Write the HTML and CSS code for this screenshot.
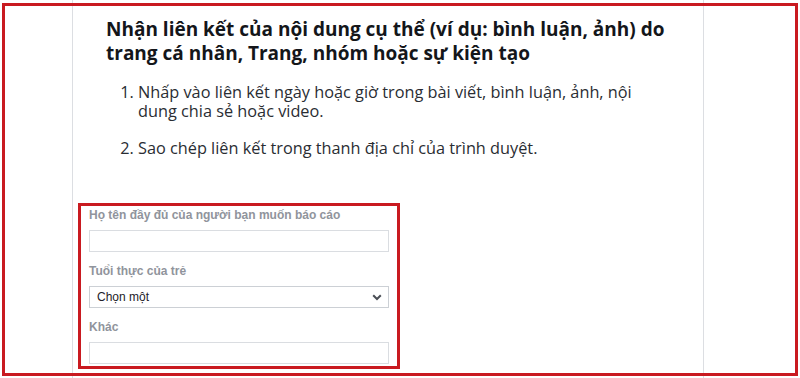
FILE: index.html
```html
<!DOCTYPE html>
<html lang="vi">
<head>
<meta charset="utf-8">
<title>Báo cáo</title>
<link rel="stylesheet" href="styles.css">
</head>
<body>
<div class="page">
  <div class="gutter"></div>
  <main class="main">
    <section class="article">
      <h2 class="title">Nhận liên kết của nội dung cụ thể (ví dụ: bình luận, ảnh) do trang cá nhân, Trang, nhóm hoặc sự kiện tạo</h2>
      <ol class="steps">
        <li>Nhấp vào liên kết ngày hoặc giờ trong bài viết, bình luận, ảnh, nội dung chia sẻ hoặc video.</li>
        <li>Sao chép liên kết trong thanh địa chỉ của trình duyệt.</li>
      </ol>
    </section>
    <form class="form">
      <label class="label">Họ tên đầy đủ của người bạn muốn báo cáo</label>
      <input class="field" type="text">
      <label class="label">Tuổi thực của trẻ</label>
      <div class="select">
        <span class="select-text">Chọn một</span>
        <svg class="chev" width="10" height="7" viewBox="0 0 10 7"><path d="M1.2 1.2 L5 5 L8.8 1.2" fill="none" stroke="#4b4f56" stroke-width="2"/></svg>
      </div>
      <label class="label">Khác</label>
      <input class="field" type="text">
    </form>
  </main>
  <div class="gutter"></div>
</div>
<div class="mark mark-outer"></div>
<div class="mark mark-inner"></div>
</body>
</html>
```
FILE: styles.css
```css
html, body {
  margin: 0;
  padding: 0;
  background: #fff;
}
body {
  width: 800px;
  height: 378px;
  overflow: hidden;
  position: relative;
}
.page {
  display: flex;
  height: 378px;
}
.gutter {
  width: 72px;
  flex: 0 0 72px;
}
.gutter:last-child {
  flex: 1 1 auto;
}
.main {
  width: 630px;
  flex: 0 0 630px;
  border-left: 1px solid #dcdee2;
  border-right: 1px solid #dcdee2;
}
.article {
  padding: 17px 30px 0 33px;
  font-family: "Open Sans", "Noto Sans", sans-serif;
  color: #1c1e21;
}
.title {
  margin: 0;
  font-size: 19px;
  line-height: 24px;
  font-weight: 700;
  color: #14161a;
}
.steps {
  margin: 18px 0 0 0;
  padding: 0 0 0 32px;
  font-size: 16.3px;
  line-height: 19px;
  font-weight: 400;
  color: #2a2d33;
}
.steps li + li {
  margin-top: 18px;
}
.form {
  margin: 49px 0 0 16px;
  width: 300px;
  display: flex;
  flex-direction: column;
  font-family: "Liberation Sans", Arial, sans-serif;
}
.label {
  font-size: 12px;
  font-weight: 700;
  color: #90949c;
  line-height: 16px;
  margin-bottom: 7px;
}
.field {
  box-sizing: border-box;
  height: 22px;
  width: 300px;
  margin: 0 0 11px 0;
  border: 1px solid #dadde1;
  padding: 0 6px;
  font-size: 12px;
}
.select {
  box-sizing: border-box;
  height: 22px;
  width: 300px;
  border: 1px solid #ccd0d5;
  display: flex;
  align-items: center;
  justify-content: space-between;
  padding: 0 6px 0 7px;
  margin-bottom: 11px;
}
.select-text {
  font-size: 12px;
  color: #1d2129;
}
.mark {
  position: absolute;
  box-sizing: border-box;
  border: 3px solid #c91a20;
  pointer-events: none;
}
.mark-outer {
  left: 2px;
  top: 3px;
  width: 796px;
  height: 373px;
}
.mark-inner {
  left: 78px;
  top: 203px;
  width: 322px;
  height: 166px;
  border-width: 3px;
}
```
